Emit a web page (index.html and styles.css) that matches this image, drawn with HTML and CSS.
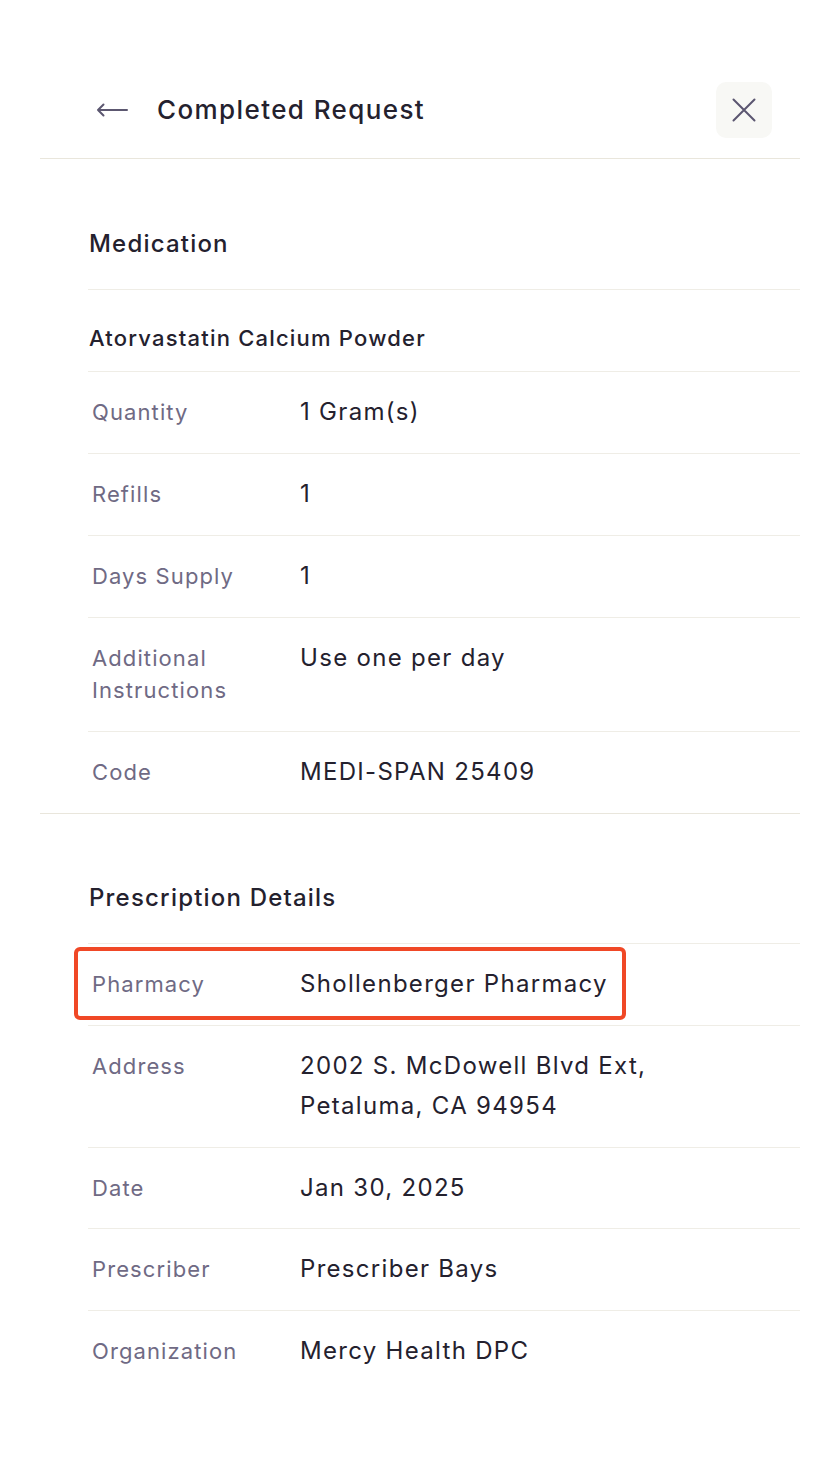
FILE: index.html
```html
<!DOCTYPE html>
<html lang="en">
<head>
<meta charset="utf-8">
<title>Completed Request</title>
<link rel="stylesheet" href="styles.css">
</head>
<body>
<div class="panel">
  <header class="header">
    <button class="back" aria-label="Back">
      <svg width="32" height="14" viewBox="0 0 32 14"><path d="M31 7H2M7.5 1.5L2 7l5.5 5.5" fill="none" stroke="#5c5770" stroke-width="2" stroke-linecap="round" stroke-linejoin="round"/></svg>
    </button>
    <h1 class="title">Completed Request</h1>
    <button class="close" aria-label="Close">
      <svg width="24" height="24" viewBox="0 0 24 24"><path d="M1.5 1.5l21 21M22.5 1.5l-21 21" stroke="#5b5670" stroke-width="2" stroke-linecap="round"/></svg>
    </button>
  </header>

  <section class="section section-first">
    <h2 class="section-title">Medication</h2>
    <div class="drug">Atorvastatin Calcium Powder</div>
    <div class="row"><div class="label">Quantity</div><div class="value">1 Gram(s)</div></div>
    <div class="row"><div class="label">Refills</div><div class="value">1</div></div>
    <div class="row"><div class="label">Days Supply</div><div class="value">1</div></div>
    <div class="row"><div class="label">Additional<br>Instructions</div><div class="value">Use one per day</div></div>
    <div class="row row-last"><div class="label">Code</div><div class="value">MEDI-SPAN 25409</div></div>
  </section>

  <section class="section section-second">
    <h2 class="section-title">Prescription Details</h2>
    <div class="row row-highlight"><div class="label">Pharmacy</div><div class="value">Shollenberger Pharmacy</div><span class="highlight"></span></div>
    <div class="row"><div class="label">Address</div><div class="value">2002 S. McDowell Blvd Ext,<br>Petaluma, CA 94954</div></div>
    <div class="row row-tight"><div class="label">Date</div><div class="value">Jan 30, 2025</div></div>
    <div class="row"><div class="label">Prescriber</div><div class="value">Prescriber Bays</div></div>
    <div class="row row-last"><div class="label">Organization</div><div class="value">Mercy Health DPC</div></div>
  </section>
</div>
</body>
</html>
```

FILE: styles.css
```css
* { box-sizing: border-box; }
html, body { margin: 0; padding: 0; background: #ffffff; }
body {
  font-family: Inter, "Noto Sans", sans-serif;
  color: #24212e;
  -webkit-font-smoothing: antialiased;
}
.panel { padding: 0 40px; }

.header {
  display: flex;
  align-items: center;
  height: 159px;
  padding: 82px 28px 20px 56px;
  border-bottom: 1px solid #e9e6dc;
}
.back {
  display: flex;
  align-items: center;
  padding: 0;
  border: 0;
  background: none;
  width: 32px;
  height: 32px;
}
.title {
  margin: 0 0 0 29px;
  flex: 1;
  font-size: 26px;
  font-weight: 500;
  letter-spacing: 1.4px;
  line-height: 32px;
  color: #24212e;
}
.close {
  width: 56px;
  height: 56px;
  border: 0;
  border-radius: 10px;
  background: #f8f8f5;
  display: flex;
  align-items: center;
  justify-content: center;
  padding: 0;
}

.section { padding-left: 48px; }
.section-first { border-bottom: 1px solid #e9e6dc; }
.section-title {
  margin: 0;
  padding: 69px 0 29px 1px;
  font-size: 24px;
  font-weight: 500;
  letter-spacing: 1.2px;
  line-height: 32px;
  border-bottom: 1px solid #efede6;
}
.section-second .section-title { padding-top: 68px; }
.drug {
  padding: 28px 0 13px 1px;
  font-size: 22px;
  font-weight: 500;
  letter-spacing: 1.2px;
  line-height: 40px;
  border-bottom: 1px solid #efede6;
}
.row {
  position: relative;
  display: flex;
  align-items: flex-start;
  padding: 20px 0 21px;
  border-bottom: 1px solid #efede6;
}
.row-tight { padding-bottom: 20px; }
.row-last { border-bottom: 0; }
.label {
  width: 212px;
  padding: 4px 0 4px 4px;
  font-size: 22px;
  line-height: 32px;
  letter-spacing: 1.1px;
  color: #6f6a84;
}
.value {
  font-size: 24px;
  line-height: 40px;
  letter-spacing: 1.3px;
  color: #24212e;
}
.highlight {
  position: absolute;
  left: -14px;
  top: 3px;
  width: 552px;
  bottom: 5px;
  border: 4px solid #f04826;
  border-radius: 6px;
  pointer-events: none;
}
```
